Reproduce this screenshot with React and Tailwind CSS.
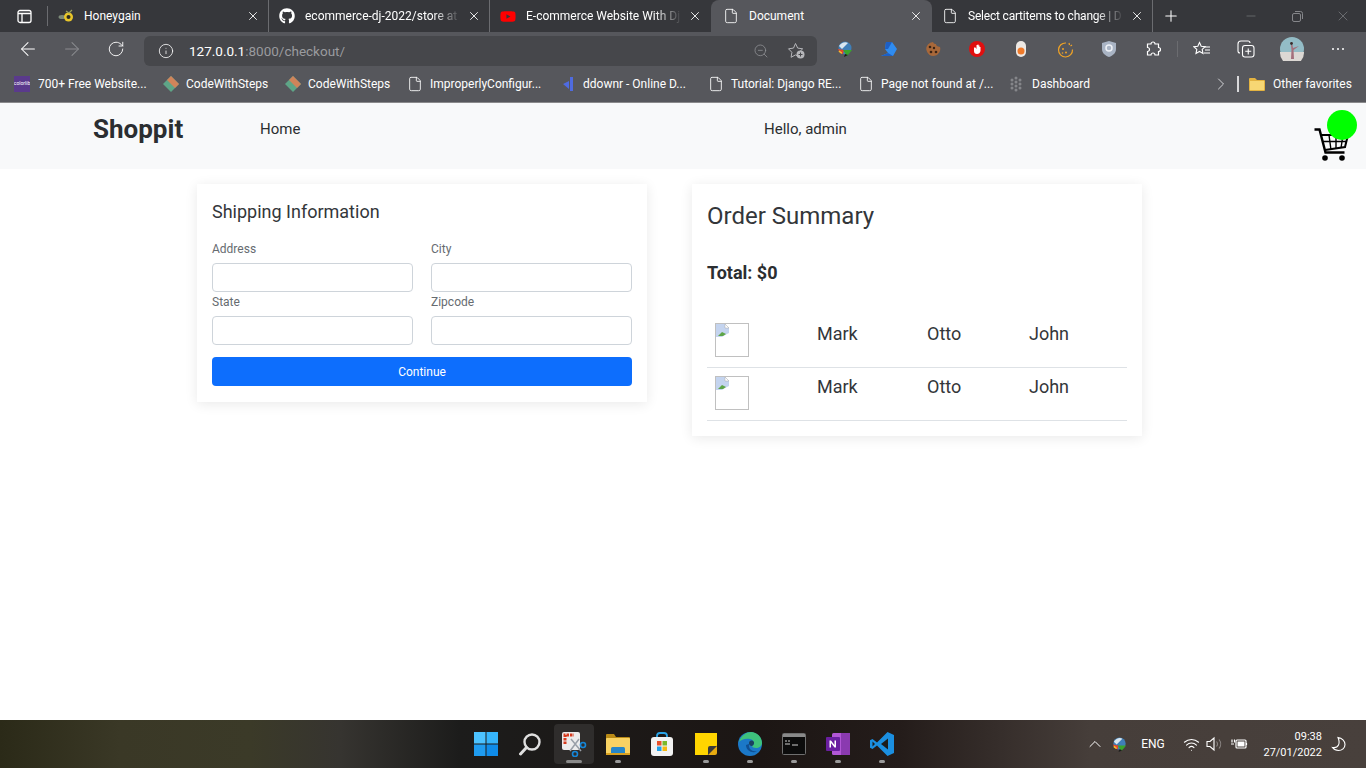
import {
  ArrowLeft,
  ArrowRight,
  ChevronRight,
  ChevronUp,
  File,
  Info,
  Minus,
  Plus,
  RotateCw,
  Wifi,
  X,
  ZoomOut,
} from 'lucide-react';
import { FaGithub, FaYoutube } from 'react-icons/fa';

const HoneyIcon = () => (
  <svg width="16" height="16" viewBox="0 0 16 16">
    <ellipse cx="4" cy="9" rx="3.5" ry="2" fill="#7c8a78" />
    <circle cx="10.5" cy="9" r="4.5" fill="#e8c62a" />
    <circle cx="10.5" cy="9" r="2" fill="#2b2b20" />
    <path d="M8 3l3 2 3-3" stroke="#9aa25a" strokeWidth="1.2" fill="none" />
  </svg>
);

const PageIcon = ({ size = 16 }) => <File size={size} strokeWidth={1.3} className="text-white" />;

const Tab = ({ icon, title, active, separator, fade = true, tight }) => (
  <div
    className={`flex h-8 w-[221px] shrink-0 items-center ${
      active ? 'rounded-t-lg bg-[#56575c] pl-[12px]' : 'pl-[10px]'
    } ${separator ? 'border-r border-[#6b6c70]' : ''}`}
  >
    <span className="flex w-4 shrink-0 justify-center">{icon}</span>
    <span
      className={`ml-[10px] min-w-0 flex-1 overflow-hidden whitespace-nowrap text-xs text-white ${
        fade ? '[mask-image:linear-gradient(to_right,black_82%,transparent)]' : ''
      } ${tight ? 'tracking-[-0.2px]' : ''}`}
    >
      {title}
    </span>
    <X size={14} strokeWidth={1.5} className={`ml-[6px] shrink-0 text-white ${separator ? 'mr-[8px]' : 'mr-[9px]'}`} />
  </div>
);

const TabStrip = () => (
  <div className="flex h-8 items-center bg-[#36373b]">
    <div className="flex h-8 w-[48px] shrink-0 items-center pl-[17px]">
      <svg width="15" height="15" viewBox="0 0 15 15" fill="none" stroke="white" strokeWidth="1.3">
        <rect x="1" y="1.5" width="13" height="12" rx="2" />
        <path d="M1 4.5h13M5 4.5v9" />
      </svg>
      <span className="ml-[15px] h-5 border-l border-[#6b6c70]" />
    </div>
    <Tab icon={<HoneyIcon />} title="Honeygain" separator fade={false} />
    <Tab icon={<FaGithub size={16} className="text-white" />} title="ecommerce-dj-2022/store at" separator />
    <Tab icon={<FaYoutube size={17} className="text-[#f00]" />} title="E-commerce Website With Dj" />
    <Tab icon={<PageIcon />} title="Document" active fade={false} />
    <Tab icon={<PageIcon />} title="Select cartitems to change | D" separator tight />
    <Plus size={18} strokeWidth={1.4} className="ml-[9px] text-white" />
    <div className="ml-auto flex items-center text-[#85868a]">
      <span className="flex w-[46px] justify-center">
        <Minus size={14} strokeWidth={1} />
      </span>
      <span className="flex w-[46px] justify-center">
        <svg width="11" height="11" viewBox="0 0 11 11" fill="none" stroke="currentColor">
          <rect x="0.5" y="2.5" width="8" height="8" rx="1.5" />
          <path d="M3 .5h5.5a2 2 0 0 1 2 2V8" />
        </svg>
      </span>
      <span className="flex w-[46px] justify-center">
        <X size={16} strokeWidth={1} />
      </span>
    </div>
  </div>
);

const IdmIcon = ({ size = 18 }) => (
  <svg width={size} height={size} viewBox="0 0 18 18">
    <circle cx="9" cy="8" r="6.5" fill="#3f7fb8" />
    <path d="M3 6c2-3 6-5 9-3L6 9z" fill="#d9e6ef" />
    <path d="M2 9c1 3 3 5 5 5l1-4z" fill="#e5442c" />
    <path d="M3 11c1 1 2 2 3 2" stroke="#f0c02c" strokeWidth="1.6" fill="none" />
    <path d="M7 10h9l-5 6z" fill="#3aa52c" />
    <path d="M9 14l-1 3 4-2z" fill="#1b1b1b" />
  </svg>
);

const CookieIcon = () => (
  <svg width="16" height="16" viewBox="0 0 16 16">
    <path d="M8 1c1 2 2 2 3 2 0 1.500 1 2.500 4 3a7 7 0 1 1-7-5z" fill="#a8683a" />
    <g fill="#3a2416">
      <circle cx="5" cy="6" r="1.300" />
      <circle cx="9" cy="7" r="1.200" />
      <circle cx="6" cy="11" r="1.300" />
      <circle cx="11" cy="11" r="1.300" />
    </g>
  </svg>
);

const ExtSlot = ({ children, className = 'w-[44px]' }) => (
  <span className={`flex shrink-0 items-center justify-center ${className}`}>{children}</span>
);

const Extensions = () => (
  <>
    <ExtSlot>
      <IdmIcon />
    </ExtSlot>
    <ExtSlot>
      <svg width="16" height="14" viewBox="0 0 16 14">
        <path d="M5 0h6l5 7-4 7H0l7-3-3-4z" fill="#2f8cf0" />
        <path d="M5 0h6L7 7 4 7z" fill="#1d5fc4" />
        <path d="M0 14l7-3 5 3z" fill="#1d5fc4" />
      </svg>
    </ExtSlot>
    <ExtSlot>
      <CookieIcon />
    </ExtSlot>
    <ExtSlot>
      <svg width="16" height="16" viewBox="0 0 16 16">
        <circle cx="8" cy="8" r="8" fill="#e00f0f" />
        <path
          d="M5 6.500V10c0 2 1 3 3 3s3-1 3.500-3V6h-1v2V4.500h-1V7.500V3.500h-1V7.500V4h-1v4l-1-1.500z"
          fill="white"
        />
      </svg>
    </ExtSlot>
    <ExtSlot>
      <svg width="10" height="16" viewBox="0 0 10 16">
        <rect width="10" height="16" rx="5" fill="#ece8e4" />
        <circle cx="5" cy="10" r="3.500" fill="#ef7a2a" />
      </svg>
    </ExtSlot>
    <ExtSlot>
      <svg width="17" height="17" viewBox="0 0 17 17" fill="none" stroke="#f0a326" strokeWidth="1.200">
        <path d="M9 2a7 7 0 1 0 6.500 6.500" />
        <path d="M12 2l.5 2M15 4l-1.500 1" />
        <g fill="#f0a326" stroke="none">
          <circle cx="6" cy="8" r="1" />
          <circle cx="9" cy="11.500" r="1" />
          <circle cx="5.500" cy="12" r=".8" />
        </g>
      </svg>
    </ExtSlot>
    <ExtSlot>
      <svg width="14" height="16" viewBox="0 0 14 16">
        <path d="M7 0l7 2v6c0 4-3 6.500-7 8-4-1.500-7-4-7-8V2z" fill="#a9b4c4" />
        <circle cx="7" cy="7" r="3" fill="none" stroke="#eef1f6" strokeWidth="1.500" />
      </svg>
    </ExtSlot>
    <ExtSlot>
      <svg width="16" height="16" viewBox="0 0 16 16" fill="none" stroke="white" strokeWidth="1.200">
        <path d="M6 3a2 2 0 0 1 4 0h3.500v3.500a2 2 0 0 1 0 4V14H10a2 2 0 0 0-4 0H2.500v-3.500a2 2 0 0 0 0-4V3z" />
      </svg>
    </ExtSlot>
  </>
);

const Toolbar = () => (
  <div className="flex h-[34px] items-end bg-[#56575c]">
    <div className="flex h-[34px] w-[144px] shrink-0 items-center pl-[6px]">
      <ExtSlot>
        <ArrowLeft size={22} strokeWidth={1.1} className="text-white" />
      </ExtSlot>
      <ExtSlot>
        <ArrowRight size={22} strokeWidth={1.1} className="text-[#8b8c90]" />
      </ExtSlot>
      <ExtSlot>
        <RotateCw size={18} strokeWidth={1.2} className="text-white" />
      </ExtSlot>
    </div>
    <div className="flex h-[30px] w-[673px] shrink-0 items-center rounded-md bg-[#46474b] pl-[14px]">
      <Info size={16} strokeWidth={1.2} className="text-white" />
      <span className="ml-[15px] text-[13.5px] text-white">
        127.0.0.1<span className="text-[#9a9b9f]">:8000/checkout/</span>
      </span>
      <ZoomOut size={16} strokeWidth={1.1} className="ml-auto text-[#96979b]" />
      <svg width="20" height="18" viewBox="0 0 20 18" fill="none" className="ml-[18px] mr-[10px]">
        <path
          d="M8.500 1.500l2.200 4.600 5 .7-3.600 3.500.8 5-4.400-2.400-4.400 2.400.8-5L1.500 6.800l5-.7z"
          stroke="#b5b6ba"
        />
        <circle cx="13.500" cy="12.500" r="4" fill="#b5b6ba" />
        <path d="M11.500 12.500h4M13.500 10.500v4" stroke="#46474b" />
      </svg>
    </div>
    <div className="flex h-[34px] items-center pl-[6px]">
      <Extensions />
      <span className="ml-[2px] h-[16px] border-l border-[#6b6c70]" />
      <ExtSlot className="ml-[2px] w-[44px]">
        <svg width="18" height="16" viewBox="0 0 18 16" fill="none" stroke="white" strokeWidth="1.100">
          <path d="M6.500 1.500l1.700 3.700 4 .5-3 2.700.8 4-3.500-2-3.500 2 .8-4-3-2.700 4-.5z" />
          <path d="M12 6h5M12 9h5M11 12h6" />
        </svg>
      </ExtSlot>
      <ExtSlot>
        <svg width="18" height="18" viewBox="0 0 18 18" fill="none" stroke="white" strokeWidth="1.100">
          <rect x="5.500" y="5.500" width="11.500" height="11.500" rx="2.500" />
          <path d="M11.250 8.500v6M8.250 11.250h6" />
          <path d="M13 3a2 2 0 0 0-2-2H4a3 3 0 0 0-3 3v7a2 2 0 0 0 2 2" />
        </svg>
      </ExtSlot>
      <ExtSlot className="ml-[2px] w-[44px]">
        <svg width="24" height="24" viewBox="0 0 24 24">
          <circle cx="12" cy="12" r="12" fill="#93bcc6" />
          <path d="M0 15h24v1a12 12 0 0 1-24 0z" fill="#dcd8d4" />
          <path d="M11 8h1.500l.5 3 6-2-5.500 4 .5 9h-3l.5-9z" fill="#a4707c" />
          <circle cx="11.500" cy="6.500" r="1.400" fill="#3a2a2a" />
        </svg>
      </ExtSlot>
      <ExtSlot className="ml-[2px] w-[44px]">
        <span className="flex gap-[3px]">
          <span className="h-[2px] w-[2px] rounded-full bg-white" />
          <span className="h-[2px] w-[2px] rounded-full bg-white" />
          <span className="h-[2px] w-[2px] rounded-full bg-white" />
        </span>
      </ExtSlot>
    </div>
  </div>
);

const Diamond = () => (
  <svg width="16" height="16" viewBox="0 0 16 16">
    <path d="M8 0l8 8-8 8-8-8z" fill="#5ea587" />
    <path d="M8 0l8 8-4 4-8-8z" fill="#d0845a" />
  </svg>
);

const Bookmark = ({ icon, label, width }) => (
  <div className={`flex shrink-0 items-center ${width}`}>
    {icon}
    <span className="whitespace-nowrap text-xs text-white">{label}</span>
  </div>
);

const BookmarksBar = () => (
  <div className="flex h-[37px] items-center border-b border-[#8a8a8c] bg-[#56575c] pb-px pl-[14px]">
    <Bookmark
      width="w-[149px]"
      label="700+ Free Website..."
      icon={
        <span className="mr-2 flex h-4 w-4 items-center justify-center overflow-hidden bg-[#5a3a8c] text-[5px] leading-none text-white">
          colorlib
        </span>
      }
    />
    <Bookmark width="w-[122px]" label="CodeWithSteps" icon={<span className="mr-[7px] flex"><Diamond /></span>} />
    <Bookmark width="w-[122px]" label="CodeWithSteps" icon={<span className="mr-[7px] flex"><Diamond /></span>} />
    <Bookmark width="w-[153px]" label="ImproperlyConfigur..." icon={<span className="mr-[7px] flex"><PageIcon /></span>} />
    <Bookmark
      width="w-[148px]"
      label="ddownr - Online D..."
      icon={
        <svg width="16" height="16" viewBox="0 0 16 16" className="mr-[7px]">
          <path d="M10 1h3v14h-3zM3 8l6-3v8z" fill="#4f6be0" />
        </svg>
      }
    />
    <Bookmark width="w-[150px]" label="Tutorial: Django RE..." icon={<span className="mr-[7px] flex"><PageIcon /></span>} />
    <Bookmark width="w-[150px]" label="Page not found at /..." icon={<span className="mr-[7px] flex"><PageIcon /></span>} />
    <Bookmark
      width="w-[203px]"
      label="Dashboard"
      icon={
        <svg width="16" height="16" viewBox="0 0 16 16" fill="#85868a" className="mr-2">
          <circle cx="8" cy="2" r="1.500" />
          <circle cx="8" cy="6" r="1.500" />
          <circle cx="8" cy="10" r="1.500" />
          <circle cx="8" cy="14" r="1.500" />
          <circle cx="4" cy="4" r="1.500" />
          <circle cx="4" cy="8" r="1.500" />
          <circle cx="4" cy="12" r="1.500" />
          <circle cx="12" cy="4" r="1.500" />
          <circle cx="12" cy="8" r="1.500" />
          <circle cx="12" cy="12" r="1.500" />
        </svg>
      }
    />
    <ChevronRight size={20} strokeWidth={1.2} className="text-[#d4d5d8]" />
    <span className="ml-[6px] mr-[10px] h-4 border-l-2 border-[#d8d8da]" />
    <svg width="16" height="14" viewBox="0 0 16 14" className="mr-2">
      <path d="M0 2a1 1 0 0 1 1-1h5l2 2h7a1 1 0 0 1 1 1v9a1 1 0 0 1-1 1H1a1 1 0 0 1-1-1z" fill="#e3b341" />
      <rect x="1" y="4" width="14" height="9" fill="#f7d774" />
    </svg>
    <span className="whitespace-nowrap text-xs text-white">Other favorites</span>
  </div>
);

const CartIcon = () => (
  <svg width="36" height="36" viewBox="0 0 36 36" fill="none" stroke="black">
    <path d="M0.500 2.500h5l6 23h19" strokeWidth="2.400" />
    <path d="M7 8h27l-3 12-20 3" strokeWidth="2" />
    <path d="M15 8l2 15M22 8v14M29 8l-2 13M8.500 14.500H33" strokeWidth="1.400" />
    <circle cx="11" cy="31" r="2.800" fill="black" stroke="none" />
    <circle cx="28" cy="31" r="2.800" fill="black" stroke="none" />
  </svg>
);

const Navbar = () => (
  <div className="flex h-[66px] shrink-0 items-center bg-[#f8f9fa] pb-[14px] pl-[93px] text-[#2b2e31]">
    <span className="w-[167px] text-[26px] font-bold">Shoppit</span>
    <span className="w-[504px] text-[15px]">Home</span>
    <span className="text-[15px]">Hello, admin</span>
    <div className="relative ml-auto mr-[16px] mt-[32px] flex h-[36px] w-[36px]">
      <CartIcon />
      {/* 장바구니 배지 */}
      <span className="absolute -right-[7px] -top-[17px] h-[30px] w-[30px] rounded-full bg-[#0f0]" />
    </div>
  </div>
);

const Field = ({ label }) => (
  <div>
    <div className="h-6 text-xs leading-5 text-[#666b70]">{label}</div>
    <input type="text" className="block h-[29px] w-full rounded-[4px] border border-[#ced4da] bg-white" />
  </div>
);

const ShippingForm = () => (
  <div className="w-[450px] shrink-0 px-[15px] pb-[16px] pt-[15px] shadow-[0_2px_12px_rgba(0,0,0,0.09)]">
    <h5 className="h-10 text-lg leading-[26px] text-[#33363a]">Shipping Information</h5>
    <div className="grid grid-cols-2 gap-x-[18px]">
      <Field label="Address" />
      <Field label="City" />
      <Field label="State" />
      <Field label="Zipcode" />
    </div>
    <button
      type="button"
      className="mt-3 block h-[29px] w-full rounded-[4px] bg-[#0d6efd] text-xs text-white"
    >
      Continue
    </button>
  </div>
);

const BrokenImage = () => (
  <div className="h-[34px] w-[34px] border border-[#c0c0c0]">
    <svg width="13" height="13" viewBox="0 0 13 13">
      <path d="M0 0h9l4 4v5l-4 2-3 2H0z" fill="#c4d4ef" />
      <path d="M2 12l4-4 4 2-3 2z" fill="#5ea548" />
      <path d="M9 0l4 4H9z" fill="white" stroke="#aaa" strokeWidth=".5" />
    </svg>
  </div>
);

const rows = [1, 2];

const OrderSummary = () => (
  <div className="w-[450px] shrink-0 px-[15px] pb-[15px] pt-[15px] shadow-[0_2px_12px_rgba(0,0,0,0.09)]">
    <h3 className="h-[34px] text-2xl leading-[34px] text-[#33363a]">Order Summary</h3>
    <div className="mt-7 h-[54px] text-lg font-bold leading-6 text-[#2b2e31]">Total: $0</div>
    <table className="w-[420px] table-fixed border-separate [border-spacing:0] text-lg text-[#33363a]">
      <colgroup>
        <col className="w-[102px]" />
        <col className="w-[110px]" />
        <col className="w-[102px]" />
        <col className="w-[106px]" />
      </colgroup>
      <tbody>
        {rows.map((row) => (
          <tr key={row} className="align-top">
            <td className="box-border h-[53px] border-b border-[#dee2e6] px-2 pt-2">
              <BrokenImage />
            </td>
            <td className="box-border h-[53px] border-b border-[#dee2e6] px-2 pt-[5px]">Mark</td>
            <td className="box-border h-[53px] border-b border-[#dee2e6] px-2 pt-[5px]">Otto</td>
            <td className="box-border h-[53px] border-b border-[#dee2e6] px-2 pt-[5px]">John</td>
          </tr>
        ))}
      </tbody>
    </table>
  </div>
);

const TaskSlot = ({ children, dot }) => (
  <div className="relative flex h-10 w-[44px] items-center justify-center">
    {children}
    {dot && <span className="absolute bottom-[1px] h-[3px] w-[6px] rounded-full bg-[#9a9a9a]" />}
  </div>
);

const Taskbar = () => (
  <div className="flex h-12 shrink-0 items-center bg-[linear-gradient(90deg,#2b2a18_0,#3a3826_120px,#3b3a28_250px,#363430_340px,#1c1c1b_460px,#1c1614_760px,#241c1a_900px,#463e3a_1090px,#48403c_1366px)] pl-[464px]">
    <TaskSlot>
      <svg width="24" height="24" viewBox="0 0 24 24">
        <rect width="11.500" height="11.500" fill="#4cc2ff" />
        <rect x="12.500" width="11.500" height="11.500" fill="#36b5fb" />
        <rect y="12.500" width="11.500" height="11.500" fill="#1f9cf0" />
        <rect x="12.500" y="12.500" width="11.500" height="11.500" fill="#0f8ce9" />
      </svg>
    </TaskSlot>
    <TaskSlot>
      <svg width="24" height="24" viewBox="0 0 24 24" fill="none">
        <circle cx="14" cy="10" r="7.500" stroke="#dfdfdf" strokeWidth="2.400" />
        <path d="M8.500 15.500L2.500 22" stroke="#dfdfdf" strokeWidth="3" strokeLinecap="round" />
      </svg>
    </TaskSlot>
    <div className="relative mx-[2px] flex h-10 w-10 items-center justify-center rounded bg-[#2f2d2c]">
      <svg width="26" height="26" viewBox="0 0 26 26">
        <rect x="1" y="1" width="18" height="18" rx="2" fill="#ececec" />
        <path d="M4 13V4h9" stroke="#d63a1e" strokeWidth="3" strokeDasharray="2.500 1" fill="none" />
        <path d="M10 8l10 12M18 8L9 20" stroke="#9aa0a8" strokeWidth="1.500" />
        <circle cx="22" cy="14" r="2.500" fill="none" stroke="#1586d8" strokeWidth="1.600" />
        <circle cx="14" cy="23" r="2.500" fill="none" stroke="#1586d8" strokeWidth="1.600" />
      </svg>
      <span className="absolute bottom-[1px] h-[3px] w-4 rounded-full bg-[#8a8a8a]" />
    </div>
    <TaskSlot dot>
      <svg width="24" height="22" viewBox="0 0 24 22">
        <path d="M0 2a1 1 0 0 1 1-1h7l2 3h13a1 1 0 0 1 1 1v3H0z" fill="#b98a16" />
        <rect y="5" width="24" height="16" rx="1" fill="#f8d263" />
        <rect x="5" y="14" width="14" height="7" rx="1.500" fill="#2586c9" />
        <rect y="20" width="24" height="2" fill="#d8a020" />
      </svg>
    </TaskSlot>
    <TaskSlot>
      <svg width="24" height="24" viewBox="0 0 24 24">
        <path d="M7 6V4a3 3 0 0 1 3-3h4a3 3 0 0 1 3 3v2" fill="none" stroke="#2aa4e8" strokeWidth="1.800" />
        <rect x="1" y="5" width="22" height="19" rx="3" fill="#f2f2f2" />
        <rect x="7" y="9" width="4.500" height="4.500" fill="#e8502a" />
        <rect x="12.500" y="9" width="4.500" height="4.500" fill="#7ab82a" />
        <rect x="7" y="14.500" width="4.500" height="4.500" fill="#1fa0e8" />
        <rect x="12.500" y="14.500" width="4.500" height="4.500" fill="#f5b90f" />
      </svg>
    </TaskSlot>
    <TaskSlot dot>
      <svg width="22" height="22" viewBox="0 0 22 22">
        <path d="M0 0h22v13l-9 9H0z" fill="#ffd500" />
        <path d="M22 12v8a2 2 0 0 1-2 2h-8z" fill="#e8ab10" />
        <path d="M22 13h-7a2 2 0 0 0-2 2v7z" fill="#3a3a3a" />
      </svg>
    </TaskSlot>
    <TaskSlot dot>
      <svg width="24" height="24" viewBox="0 0 24 24">
        <circle cx="12" cy="12" r="12" fill="#1b78c8" />
        <path d="M1 10C3 3 9 0 13 0c6 0 11 5 11 11 0 3-3 5-6 5-2 0-4-1-4-2 3-1 3-6-2-7-5-1-9 1-11 3z" fill="#3ec27c" />
        <path d="M8 13c0 5 5 8 9 7l4-2c-5 3-11 0-10-6z" fill="#0f4f94" />
        <path d="M14 14c-2 0-3-1-3-3 0-2 2-3 4-2 2 1 1 4-1 5z" fill="#1b1b1b" opacity=".6" />
      </svg>
    </TaskSlot>
    <TaskSlot dot>
      <svg width="24" height="22" viewBox="0 0 24 22">
        <rect x="0.500" y="0.500" width="23" height="21" rx="1" fill="#0c0c0c" stroke="#6f6f6f" />
        <rect x="1" y="1" width="22" height="3" fill="#8a8a8a" />
        <path d="M3 8h2M6 8h2M3 11h5M10 12h6" stroke="#cfcfcf" />
      </svg>
    </TaskSlot>
    <TaskSlot dot>
      <svg width="24" height="24" viewBox="0 0 24 24">
        <rect x="6" y="1" width="18" height="22" rx="1.500" fill="#b257d6" />
        <rect x="15" y="1" width="9" height="22" fill="#8a3ab0" />
        <rect y="5" width="14" height="14" rx="1" fill="#6a1fa0" />
        <path d="M3.500 15.500v-7h1.500l3.500 4.500V8.500h1.500v7H8.500L5 11v4.500z" fill="white" />
      </svg>
    </TaskSlot>
    <TaskSlot dot>
      <svg width="24" height="24" viewBox="0 0 24 24">
        <path d="M17.500 0L24 3v18l-6.500 3L7 13.500 2.500 17 0 15.700V8.300L2.500 7 7 10.500z" fill="#1b8fe0" />
        <path d="M18 6.500L11 12l7 5.500z" fill="#1c1c1b" />
        <path d="M2.500 9.500L5 12l-2.500 2.500z" fill="#1c1c1b" />
      </svg>
    </TaskSlot>
    <div className="ml-auto flex h-full items-center pr-[14px] text-white">
      <span className="flex w-6 justify-center">
        <ChevronUp size={20} strokeWidth={1.2} />
      </span>
      <span className="flex w-6 justify-center">
        <IdmIcon size={17} />
      </span>
      <span className="w-[44px] text-center text-xs">ENG</span>
      <span className="ml-[5px] flex w-[22px] justify-center">
        <Wifi size={17} strokeWidth={1.5} />
      </span>
      <span className="ml-[1px] flex w-[22px] justify-center">
        <svg width="16" height="16" viewBox="0 0 16 16" fill="none" stroke="white" strokeWidth="1.100">
          <path d="M1 5.500h3L8 2v12l-4-3.500H1z" />
          <path d="M10.500 5.500a4 4 0 0 1 0 5M13 3.500a7 7 0 0 1 0 9" stroke="#8a8583" />
        </svg>
      </span>
      <span className="ml-[3px] flex w-[22px] justify-center">
        <svg width="17" height="14" viewBox="0 0 17 14" fill="none" stroke="white" strokeWidth="1.200">
          <rect x="5" y="3" width="10" height="8" rx="1" />
          <rect x="6.500" y="4.500" width="7" height="5" fill="white" stroke="none" />
          <path d="M15.500 6v2M0 7h3M1 2.500v3M3.500 2.500v3" />
        </svg>
      </span>
      <div className="mt-[1px] w-[72px] text-right text-[11px] leading-[16px]">
        <div>09:38</div>
        <div>27/01/2022</div>
      </div>
      <span className="ml-1 flex w-[26px] justify-center">
        <svg width="16" height="16" viewBox="0 0 16 16" fill="none" stroke="white" strokeWidth="1.100">
          <path d="M7 1.500c4 .5 7 3.500 7 7 0 3.500-3 6-6.500 6-2.500 0-4.500-1-6-3 3 .5 5-.5 6-2.500s.5-5-.5-7.500z" />
        </svg>
      </span>
    </div>
  </div>
);

const App = () => (
  <div className="flex h-[768px] flex-col overflow-hidden bg-white [font-family:Roboto,sans-serif]">
    <TabStrip />
    <Toolbar />
    <BookmarksBar />
    <Navbar />
    <main className="flex flex-1 items-start gap-[45px] pl-[197px] pt-[15px]">
      <ShippingForm />
      <OrderSummary />
    </main>
    <Taskbar />
  </div>
);

export default App;
